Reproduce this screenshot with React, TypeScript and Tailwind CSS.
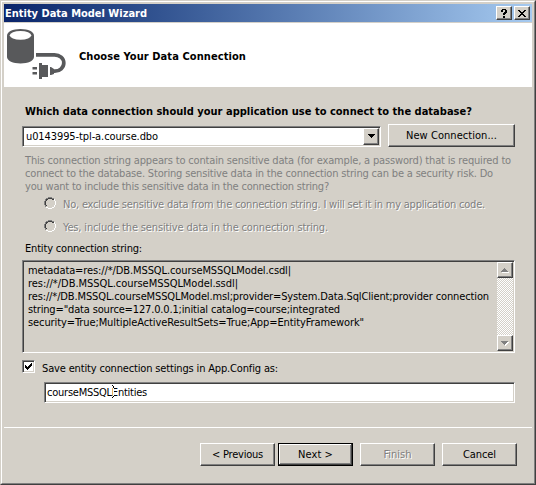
import { useLayoutEffect, useRef, useState } from "react";
import type { ReactNode } from "react";

const raised =
  "border border-t-white border-l-white border-r-[#404040] border-b-[#404040] bg-[#d4d0c8] shadow-[inset_-1px_-1px_0_#808080]";
const raisedDefault =
  "border border-black bg-[#d4d0c8] shadow-[inset_-1px_-1px_0_#404040,inset_1px_1px_0_#fff,inset_-2px_-2px_0_#808080]";
const sunken =
  "border border-t-[#808080] border-l-[#808080] border-r-white border-b-white shadow-[inset_1px_1px_0_#404040,inset_-1px_-1px_0_#d4d0c8]";

/* One line of text whose tracking is adjusted to fill the given width. */
function Line({ width, className = "", children }: { width: number; className?: string; children: string }) {
  const ref = useRef<HTMLSpanElement>(null);
  const [spacing, setSpacing] = useState(0);
  useLayoutEffect(() => {
    if (ref.current) {
      setSpacing((width - ref.current.getBoundingClientRect().width) / children.length);
    }
  }, [width, children]);
  return (
    <span className={`block w-max whitespace-pre ${className}`}>
      <span ref={ref} style={{ letterSpacing: spacing }}>
        {children}
      </span>
    </span>
  );
}

function Button({
  isDefault = false,
  className = "",
  children,
}: {
  isDefault?: boolean;
  className?: string;
  children: ReactNode;
}) {
  return (
    <button
      className={`flex h-[23px] shrink-0 items-center justify-center ${isDefault ? raisedDefault : raised} ${className}`}
    >
      {children}
    </button>
  );
}

function Triangle({ up = false, disabled = false }: { up?: boolean; disabled?: boolean }) {
  const d = up ? "M3 0h1v1h1v1h1v1h1v1H0V3h1V2h1V1h1z" : "M0 0h7v1H6v1H5v1H4v1H3V3H2V2H1V1H0z";
  return (
    <svg width="8" height="5" viewBox="0 0 8 5" shapeRendering="crispEdges">
      {disabled && <path d={d} fill="#fff" transform="translate(1 1)" />}
      <path d={d} fill={disabled ? "#808080" : "#000"} />
    </svg>
  );
}

function Radio({ label, width }: { label: string; width: number }) {
  return (
    <label className="flex h-[23px] items-start">
      <svg className="mt-[5px]" width="12" height="12" viewBox="0 0 12 12" shapeRendering="crispEdges">
        <path d="M4 0h4v1H4zM2 1h2v1H2zM8 1h2v1H8zM1 2h1v2H1zM0 4h1v4H0zM1 8h1v2H1z" fill="#808080" />
        <path d="M4 1h4v1H4zM2 2h2v1H2zM8 2h2v1H8zM2 3h1v1H2zM1 4h1v4H1zM2 8h1v1H2z" fill="#404040" />
        <path d="M10 2h1v2h-1zM11 4h1v4h-1zM10 8h1v2h-1zM8 10h2v1H8zM4 11h4v1H4zM2 10h2v1H2z" fill="#fff" />
      </svg>
      <Line width={width} className="mt-[6px] ml-[7px] text-[#808080] [text-shadow:1px_1px_0_#fff]">
        {label}
      </Line>
    </label>
  );
}

function ConnectionIcon() {
  return (
    <svg width="66" height="64" viewBox="4 23 66 64" fill="#58595b">
      <path d="M7 35.5C7 31.8 12.8 29 20.500 29S34 31.800 34 35.500V57c0 3.700-6 6.500-13.500 6.500S7 60.700 7 57z" />
      <ellipse cx="20.500" cy="35.300" rx="10.700" ry="4.400" fill="#fff" />
      <path d="M36 54.800h18.500c5.200 0 9.300 3.700 9.300 8.200s-4 8.200-9 8.200H53" fill="none" stroke="#58595b" strokeWidth="3.700" />
      <path d="M39 63h3v2h6v12h-6v2h-3zM50 67h1l3 2v5l-3 1h-1zM32.500 67H37v2.500h-4.500zM32.500 72H37v2.500h-4.500z" />
    </svg>
  );
}

export default function App() {
  return (
    <div className="h-[485px] w-[536px] border border-t-[#d4d0c8] border-r-[#404040] border-b-[#404040] border-l-[#d4d0c8] bg-[#d4d0c8] font-['DejaVu_Sans_Condensed','DejaVu_Sans',sans-serif] text-[11px] leading-[13px] text-black [font-stretch:condensed]">
      <div className="flex h-full flex-col border border-t-white border-r-[#808080] border-b-[#808080] border-l-white px-[2px] pt-[2px] pr-px">
        <header className="mr-px flex h-[18px] shrink-0 items-center justify-between bg-linear-to-r from-[#0a246a] to-[#a6caf0] pr-[2px] pl-px">
          <Line width={142} className="font-bold text-white">Entity Data Model Wizard</Line>
          <div className="flex gap-[2px]">
            <button className={`flex h-[14px] w-4 items-center justify-center ${raised}`}>
              <svg width="8" height="9" viewBox="0 0 8 9" shapeRendering="crispEdges">
                <path d="M2 0h4v1h1v3H6v1H5v1H3V4h1V3h1V1H3v2H1V1h1zM3 7h2v2H3z" />
              </svg>
            </button>
            <button className={`flex h-[14px] w-4 items-center justify-center ${raised}`}>
              <svg width="8" height="7" viewBox="0 0 8 7" shapeRendering="crispEdges">
                <path d="M0 0h2v1h1v1h2V1h1V0h2v1H7v1H6v1H5v1h1v1h1v1h1v1H6V6H5V5H3v1H2v1H0V6h1V5h1V4h1V3H2V2H1V1H0z" />
              </svg>
            </button>
          </div>
        </header>
        <section className="mt-px mr-px flex h-16 shrink-0 items-center bg-white">
          <ConnectionIcon />
          <Line width={167} className="ml-[9px] pt-[2px] font-bold">Choose Your Data Connection</Line>
        </section>
        <main className="flex flex-col pr-[18px] pl-[18px]">
          <Line width={447} className="mt-[18px] ml-[3px] font-bold">
            Which data connection should your application use to connect to the database?
          </Line>
          <div className="mt-[6px] flex items-start gap-[7px]">
            <div className={`mt-[2px] flex h-[21px] w-[359px] items-center justify-between bg-white pr-px pl-[3px] ${sunken}`}>
              <Line width={132}>u0143995-tpl-a.course.dbo</Line>
              <button className={`flex h-[17px] w-4 items-center justify-center pl-px ${raised}`}>
                <Triangle />
              </button>
            </div>
            <Button className="w-[127px]">
              <Line width={91}>New Connection...</Line>
            </Button>
          </div>
          <div className="mt-[7px] ml-[3px] text-[#808080]">
            <Line width={486}>This connection string appears to contain sensitive data (for example, a password) that is required to</Line>
            <Line width={468}>connect to the database. Storing sensitive data in the connection string can be a security risk. Do</Line>
            <Line width={304}>you want to include this sensitive data in the connection string?</Line>
          </div>
          <div className="-mt-px ml-[22px]">
            <Radio width={422} label="No, exclude sensitive data from the connection string. I will set it in my application code." />
            <Radio width={265} label="Yes, include the sensitive data in the connection string." />
          </div>
          <Line width={117} className="mt-[4px] ml-[3px]">Entity connection string:</Line>
          <div className={`mt-[5px] flex h-[93px] w-[493px] justify-between p-px ${sunken}`}>
            <div className="pt-[2px] pl-[4px]">
              <Line width={263}>metadata=res://*/DB.MSSQL.courseMSSQLModel.csdl|</Line>
              <Line width={210}>res://*/DB.MSSQL.courseMSSQLModel.ssdl|</Line>
              <Line width={461}>res://*/DB.MSSQL.courseMSSQLModel.msl;provider=System.Data.SqlClient;provider connection</Line>
              <Line width={312}>string="data source=127.0.0.1;initial catalog=course;integrated</Line>
              <Line width={336}>security=True;MultipleActiveResultSets=True;App=EntityFramework"</Line>
            </div>
            <div className="flex w-4 shrink-0 flex-col justify-between bg-[repeating-conic-gradient(#fff_0_25%,#d4d0c8_0_50%)] bg-[length:2px_2px]">
              <button className={`flex h-4 w-4 items-center justify-center ${raised}`}>
                <Triangle up disabled />
              </button>
              <button className={`flex h-4 w-4 items-center justify-center ${raised}`}>
                <Triangle disabled />
              </button>
            </div>
          </div>
          <label className="mt-[7px] flex h-[15px] items-start">
            <span className={`flex h-[13px] w-[13px] items-center justify-center bg-white ${sunken}`}>
              <svg width="7" height="7" viewBox="0 0 7 7" shapeRendering="crispEdges">
                <path d="M0 2h1v1h1v1h1V3h1V2h1V1h1V0h1v3H6v1H5v1H4v1H3v1H2V6H1V5H0z" />
              </svg>
            </span>
            <Line width={236} className="mt-[2px] ml-[7px]">Save entity connection settings in App.Config as:</Line>
          </label>
          <div className={`relative mt-[7px] ml-[22px] flex h-[21px] w-[471px] items-center bg-white pl-[2px] ${sunken}`}>
            <Line width={100}>courseMSSQLEntities</Line>
            <svg className="absolute top-[2px] left-[67px]" width="2" height="13" viewBox="0 0 2 13" shapeRendering="crispEdges">
              <path d="M1 3h1v8H1z" fill="#fff" />
              <path d="M0 0h1v1H0zM1 1h1v2H1zM1 11h1v1H1zM0 12h1v1H0z" />
            </svg>
          </div>
        </main>
        <footer className="mt-6 mr-px flex h-14 shrink-0 justify-end border-t border-white pt-[15px] pr-[15px]">
          <Button className="mr-[3px] w-[75px]">
            <Line width={51}>&lt; Previous</Line>
          </Button>
          <Button isDefault className="mr-[7px] w-[75px]">
            <Line width={35}>Next &gt;</Line>
          </Button>
          <Button className="mr-[7px] w-[75px]">
            <Line width={28} className="text-[#808080] [text-shadow:1px_1px_0_#fff]">Finish</Line>
          </Button>
          <Button className="w-[75px]">
            <Line width={33}>Cancel</Line>
          </Button>
        </footer>
      </div>
    </div>
  );
}
